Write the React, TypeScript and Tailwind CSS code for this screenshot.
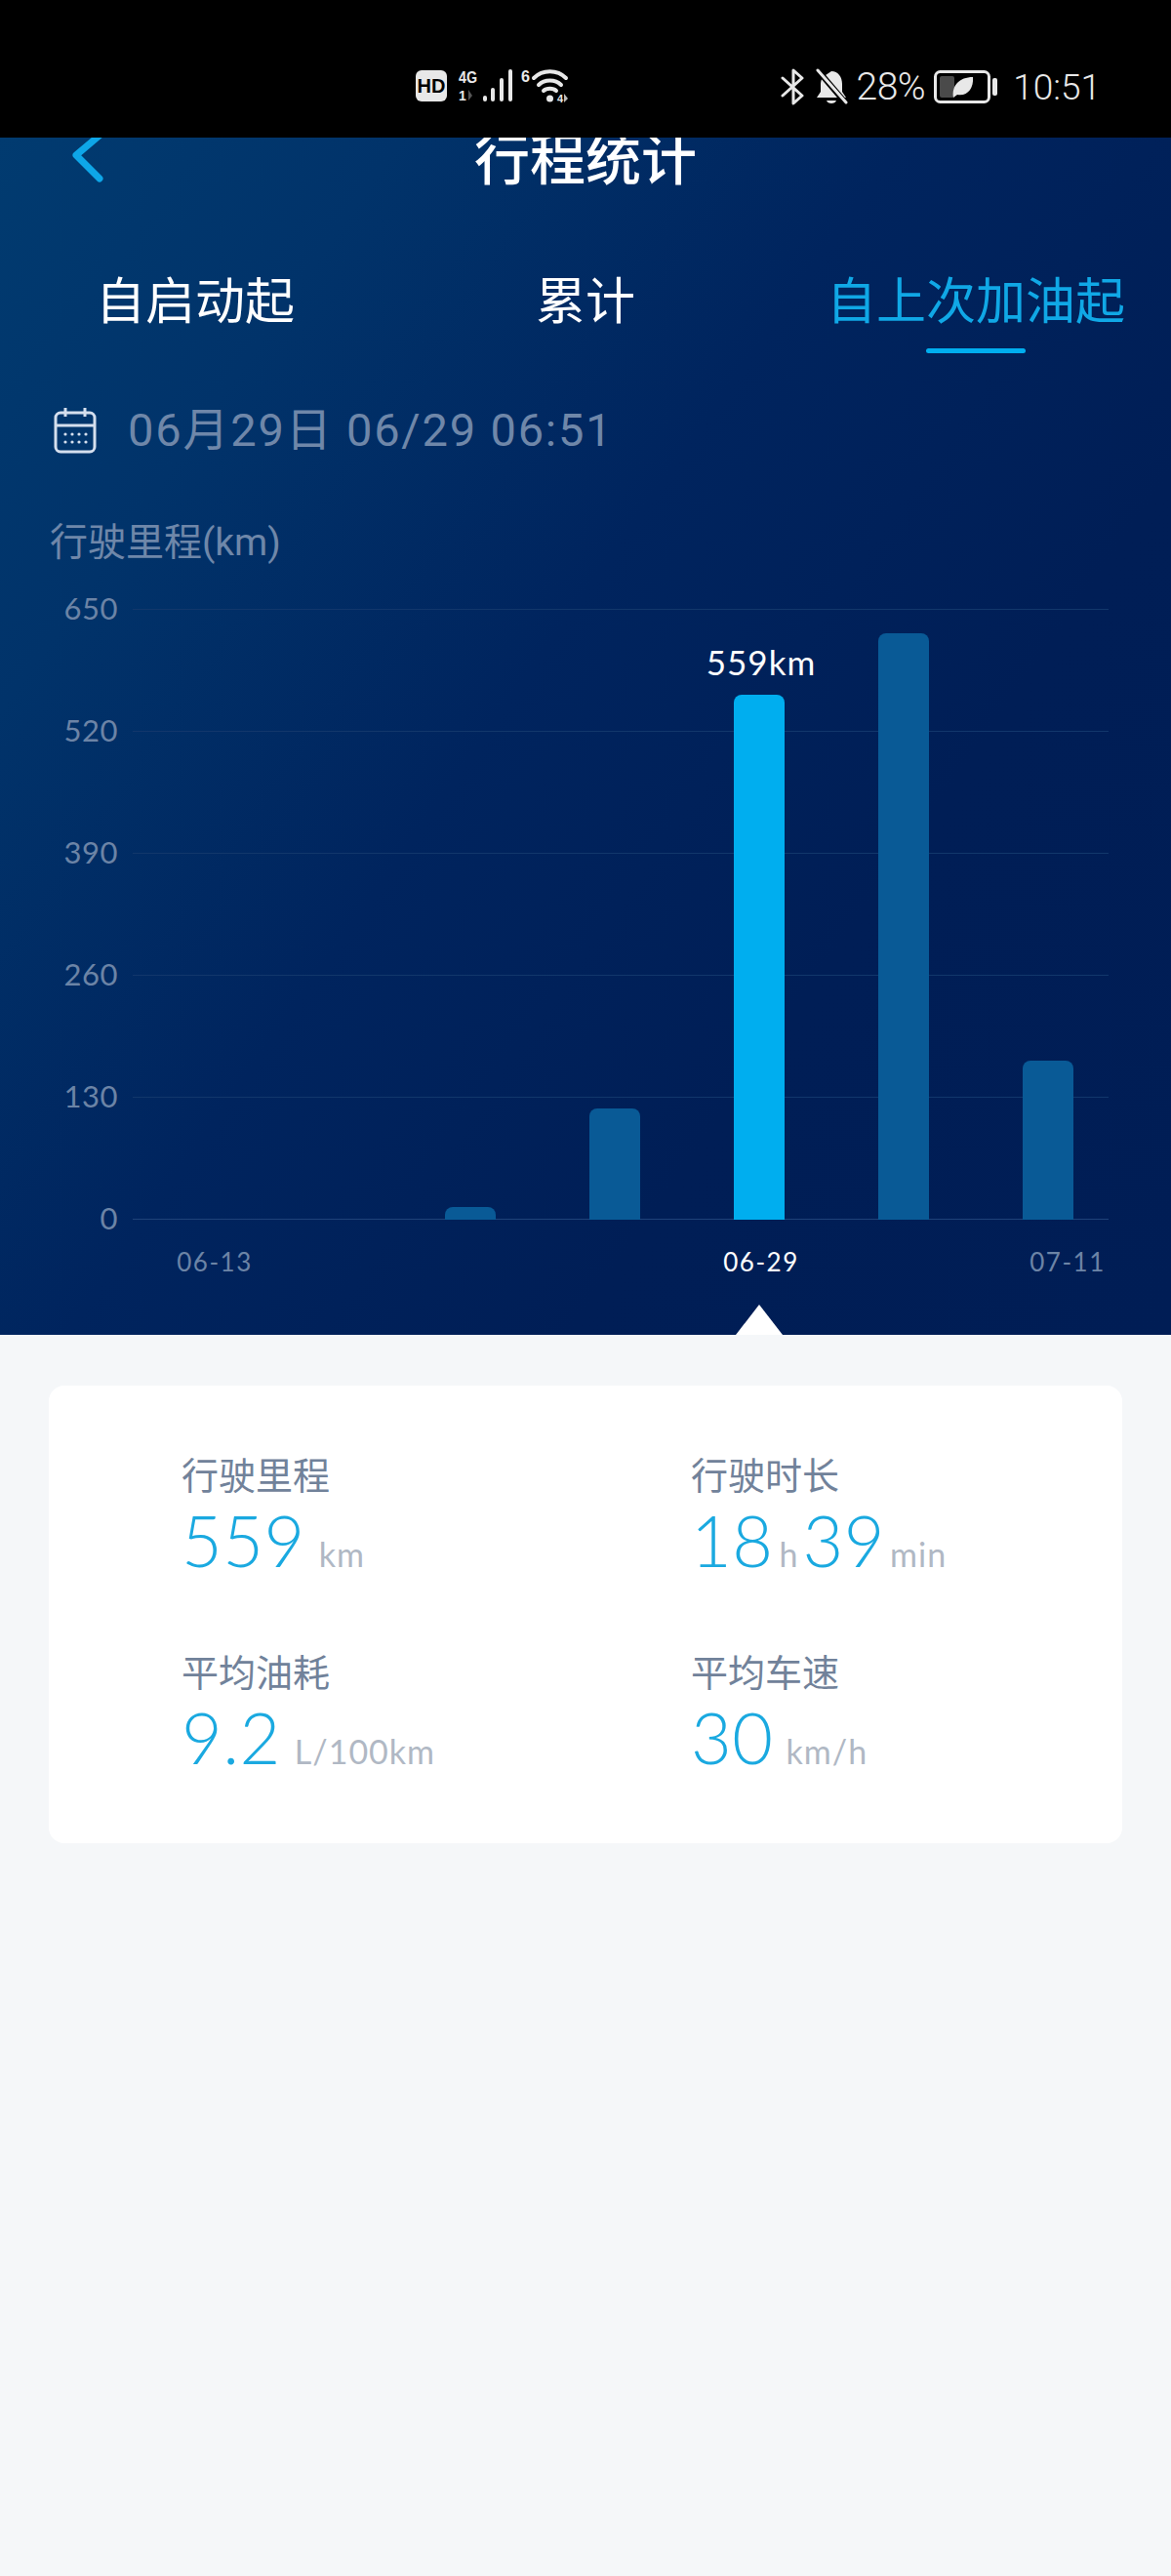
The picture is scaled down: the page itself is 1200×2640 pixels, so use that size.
import React from "react";

const FONT = "[font-family:'Noto_Sans_CJK_SC',sans-serif]";

function StatusLeft() {
  return (
    <svg width="160" height="40" viewBox="0 0 160 40" className="ml-[426px] shrink-0">
      <rect x="0" y="3" width="32" height="32" rx="6" fill="#e8e8e8" />
      <text x="16" y="26" textAnchor="middle" fontSize="20" fontWeight="700" fontFamily="'Liberation Sans',sans-serif" fill="#000">HD</text>
      <text x="44" y="16" fontSize="17" fontWeight="700" textLength="19" lengthAdjust="spacingAndGlyphs" fontFamily="'Liberation Sans',sans-serif" fill="#e8e8e8">4G</text>
      <text x="44" y="34" fontSize="14" fontWeight="700" fontFamily="'Liberation Sans',sans-serif" fill="#e8e8e8">1</text>
      <path d="M54 23v11l4-5z" fill="#555" />
      <rect x="69" y="29" width="4" height="6" rx="2" fill="#e8e8e8" />
      <rect x="77" y="21" width="4" height="14" rx="2" fill="#e8e8e8" />
      <rect x="86" y="11" width="4" height="24" rx="2" fill="#e8e8e8" />
      <rect x="95" y="2" width="4" height="33" rx="2" fill="#e8e8e8" />
      <text x="108" y="15" fontSize="17" fontWeight="700" textLength="9" lengthAdjust="spacingAndGlyphs" fontFamily="'Liberation Sans',sans-serif" fill="#e8e8e8">6</text>
      <g fill="none" stroke="#e8e8e8" strokeWidth="4" strokeLinecap="round">
        <path d="M121 11c9-9 24-9 33 0" />
        <path d="M126 18c6-6 17-6 23 0" />
        <path d="M131 24c3-3 10-3 13 0" />
      </g>
      <circle cx="137.500" cy="32" r="3.500" fill="#e8e8e8" />
      <text x="145" y="36" fontSize="11" fontWeight="700" fontFamily="'Liberation Sans',sans-serif" fill="#e8e8e8">4</text>
      <path d="M152 27v9l4-4z" fill="#bbb" />
    </svg>
  );
}

function StatusRight() {
  return (
    <div className="ml-auto mr-[72px] flex items-center text-[#e8e8e8] [font-family:Roboto,sans-serif]">
      <svg width="24" height="38" viewBox="0 0 24 38" fill="none" stroke="#e8e8e8" strokeWidth="3" strokeLinejoin="round" strokeLinecap="round">
        <path d="M2 10l20 18-9 8V2l9 8L2 28" />
      </svg>
      <svg width="34" height="38" viewBox="0 0 34 38" className="ml-[11px]">
        <path d="M17 3c7 0 11 6 11 13v8l4 6H2l4-6v-8c0-3 1-5 2-7z" fill="#e8e8e8" />
        <path d="M12 33c1 4 9 4 10 0z" fill="#e8e8e8" />
        <path d="M3 2l29 34" stroke="#000" strokeWidth="6" />
        <path d="M3 2l29 33" stroke="#e8e8e8" strokeWidth="3" strokeLinecap="round" />
      </svg>
      <span className="ml-[9px] text-[39px] leading-none font-[350] tracking-[-0.5px]">28%</span>
      <svg width="66" height="34" viewBox="0 0 66 34" className="ml-[9px]">
        <rect x="1.500" y="1.500" width="55" height="31" rx="5" fill="none" stroke="#e8e8e8" strokeWidth="3" />
        <rect x="6" y="6" width="15" height="22" rx="2" fill="#4a4a4a" />
        <path d="M20 28c-2-12 6-21 20-21 1 12-6 20-16 18l-4 3z" fill="#e8e8e8" />
        <rect x="60" y="8" width="5" height="18" rx="2" fill="#e8e8e8" />
      </svg>
      <span className="ml-[15px] text-[37px] leading-none font-[350]">10:51</span>
    </div>
  );
}

const yLabels = ["650", "520", "390", "260", "130", "0"];
const bars = [
  { x: 320, h: 13 },
  { x: 468, h: 114 },
  { x: 616, h: 538, active: true },
  { x: 764, h: 601 },
  { x: 912, h: 163 },
];

function Chart() {
  return (
    <div className="flex mt-[43px]">
      <div className="w-[121px] h-[626px] -mt-px flex flex-col justify-between items-end text-[31px] leading-none text-[#6c84a6] [font-family:Lato,sans-serif] shrink-0">
        {yLabels.map((l) => (
          <span key={l} className="h-0 flex items-center tracking-[0.5px]">{l}</span>
        ))}
      </div>
      <div className="ml-[15px] w-[1000px]">
        <div className="relative h-[626px]">
          <div className="h-full flex flex-col justify-between">
            {yLabels.map((l, i) => (
              <div key={l} className={`h-px ${i === 5 ? "bg-[#1f4279]" : "bg-[#12376b]"}`} />
            ))}
          </div>
          <div className="absolute left-0 right-0 bottom-0 top-0">
            {bars.map((b) => (
              <div
                key={b.x}
                className={`absolute bottom-0 w-[52px] rounded-t-[8px] ${b.active ? "bg-[#00aeef]" : "bg-[#095a96]"}`}
                style={{ left: b.x, height: b.h }}
              />
            ))}
            <span className="absolute left-[536px] w-[216px] text-center top-[37px] text-[35px] leading-none text-white tracking-[1px] [font-family:Lato,sans-serif]">
              559km
            </span>
          </div>
        </div>
        <div className="relative h-[66px] text-[26px] leading-none [font-family:Lato,sans-serif] tracking-[1.5px]">
          <span className="absolute left-[44px] w-[80px] text-center top-[30px] text-[#6c84a6]">06-13</span>
          <span className="absolute left-[604px] w-[80px] text-center top-[30px] text-white">06-29</span>
          <span className="absolute left-[918px] w-[80px] text-center top-[30px] text-[#6c84a6]">07-11</span>
        </div>
      </div>
    </div>
  );
}

function Stat({ label, children }: { label: string; children: React.ReactNode }) {
  return (
    <div>
      <div className="text-[38px] leading-[50px] text-[#71829a]">{label}</div>
      <div className="flex items-baseline h-[80px] mt-[3px] text-[#1aa9e0] [font-family:Lato,sans-serif]">{children}</div>
    </div>
  );
}

const num = "text-[72px] leading-[80px] font-light tracking-[0.5px]";
const unit = "text-[34px] leading-none text-[#b0b8c4] tracking-[1px]";

export default function App() {
  return (
    <div className={`w-[1200px] h-[2640px] bg-[#f5f7f9] overflow-hidden ${FONT}`}>
      <div className="h-[141px] bg-black flex items-center pt-[37px]">
        <StatusLeft />
        <StatusRight />
      </div>

      <div className="relative h-[1227px] overflow-hidden bg-[linear-gradient(125deg,#013b70_0%,#01336a_20%,#00245e_45%,#001e56_70%,#001d55_100%)]">
        <div className="h-[44px] relative flex justify-center">
          <svg width="40" height="70" viewBox="0 0 40 70" className="absolute left-[70px] -top-[22px]" fill="none" stroke="#0ea6e8" strokeWidth="7" strokeLinecap="round" strokeLinejoin="round">
            <path d="M34 18L8 40l24 24" />
          </svg>
          <div className="-mt-[12px] text-[57px] leading-[60px] font-medium text-white">行程统计</div>
        </div>

        <div className="grid grid-cols-3 mt-[90px] text-[51px] leading-[60px] text-white">
          <div className="flex flex-col items-center">
            <span>自启动起</span>
          </div>
          <div className="flex flex-col items-center">
            <span>累计</span>
          </div>
          <div className="flex flex-col items-center text-[#10a8e6]">
            <span>自上次加油起</span>
            <span className="mt-[22px] w-[102px] h-[5px] rounded-full bg-[#00aeef] -mb-[27px]" />
          </div>
        </div>

        <div className="flex items-center mt-[76px] pl-[55px]">
          <svg width="44" height="48" viewBox="0 0 44 48" fill="none" stroke="#d5dfee" strokeWidth="3">
            <rect x="2" y="6" width="40" height="40" rx="5" />
            <path d="M2 19h40M12 1v9M32 1v9" />
            <g stroke="none" fill="#d5dfee">
              <circle cx="12" cy="28" r="1.600" /><circle cx="19" cy="28" r="1.600" /><circle cx="26" cy="28" r="1.600" /><circle cx="33" cy="28" r="1.600" />
              <circle cx="12" cy="36" r="1.600" /><circle cx="19" cy="36" r="1.600" /><circle cx="26" cy="36" r="1.600" /><circle cx="33" cy="36" r="1.600" />
            </g>
          </svg>
          <span className="ml-[32px] text-[47px] leading-[60px] text-[#6f87a9] tracking-[1.800px] [font-family:Roboto,'Noto_Sans_CJK_SC',sans-serif]">06月29日 06/29 06:51</span>
        </div>

        <div className="mt-[60px] pl-[51px] text-[39px] leading-[50px] text-[#6f87a9] [font-family:Roboto,'Noto_Sans_CJK_SC',sans-serif]">行驶里程(km)</div>

        <Chart />

        <div className="absolute left-[754px] bottom-0 w-[48px] h-[31px] bg-white [clip-path:polygon(50%_0,100%_100%,0_100%)]" />
      </div>

      <div className="mt-[52px] mx-[50px] h-[469px] bg-white rounded-[16px] pl-[136px] pt-[65px] grid grid-cols-[522px_1fr] grid-rows-[202px_202px] content-start">
        <Stat label="行驶里程">
          <span className={num}>559</span>
          <span className={`${unit} ml-[14px]`}>km</span>
        </Stat>
        <Stat label="行驶时长">
          <span className={num}>18</span>
          <span className={`${unit} ml-[6px]`}>h</span>
          <span className={`${num} ml-[4px]`}>39</span>
          <span className={`${unit} ml-[5px]`}>min</span>
        </Stat>
        <Stat label="平均油耗">
          <span className={num}>9.2</span>
          <span className={`${unit} ml-[14px]`}>L/100km</span>
        </Stat>
        <Stat label="平均车速">
          <span className={num}>30</span>
          <span className={`${unit} ml-[13px]`}>km/h</span>
        </Stat>
      </div>
    </div>
  );
}
